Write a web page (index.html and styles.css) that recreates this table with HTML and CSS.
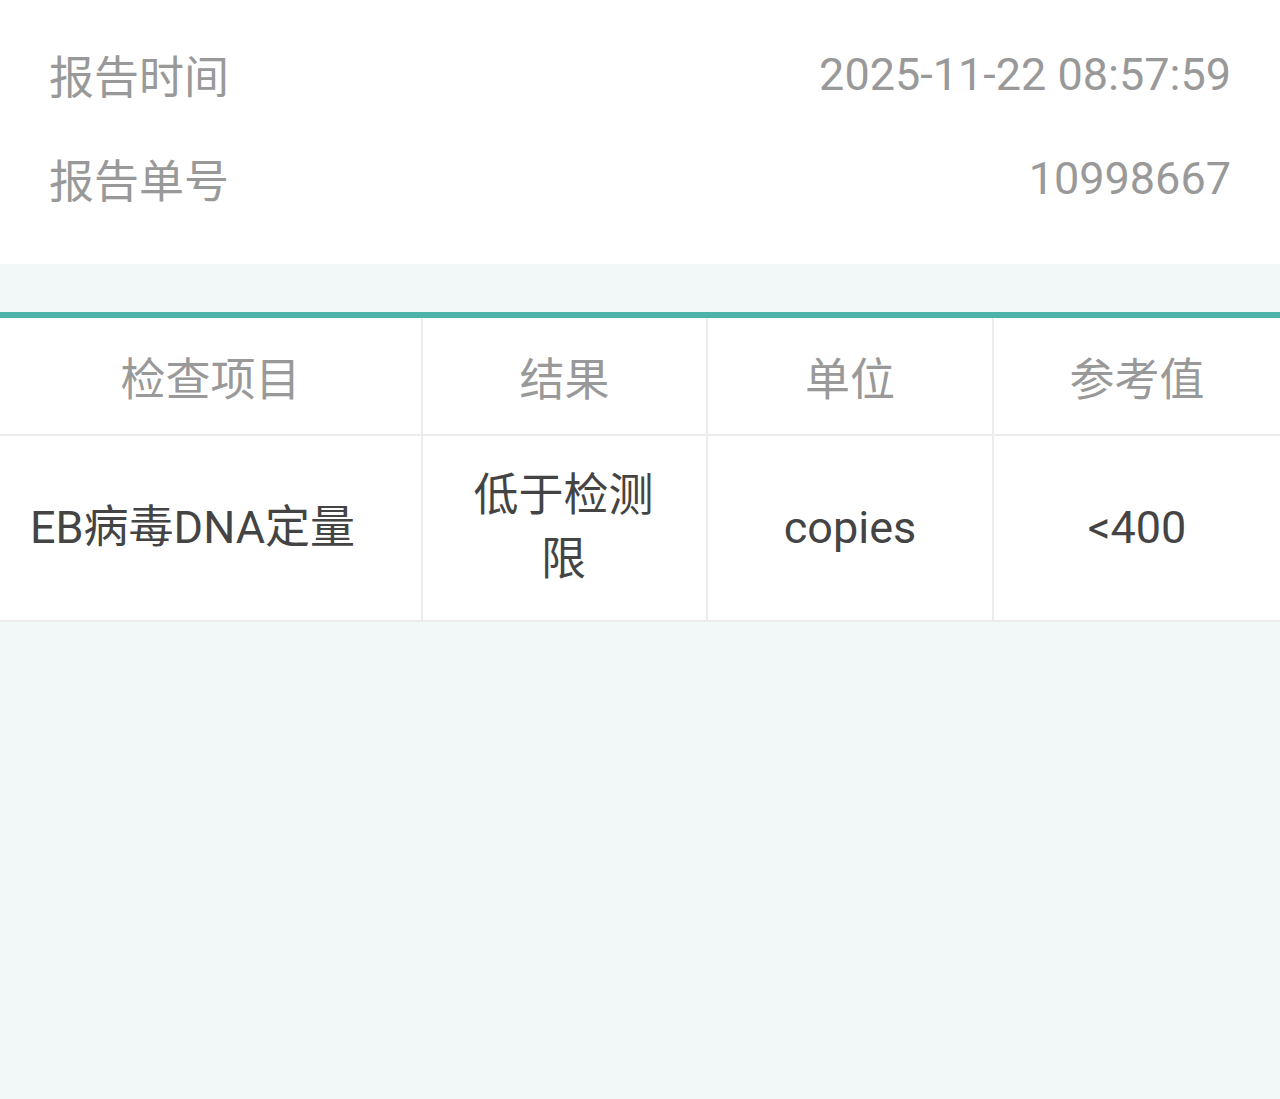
FILE: index.html
```html
<!doctype html>
<html lang="zh-CN">
  <head>
    <meta charset="UTF-8" />
    <title>检验报告</title>
    <link rel="stylesheet" href="styles.css">
  </head>
  <body>
    <div class="info">
      <div class="info-row">
        <span class="label">报告时间</span>
        <span class="value">2025-11-22 08:57:59</span>
      </div>
      <div class="info-row">
        <span class="label">报告单号</span>
        <span class="value">10998667</span>
      </div>
    </div>
    <div class="gap"></div>
    <table class="result-table">
      <colgroup>
        <col class="col-item" />
        <col class="col-result" />
        <col class="col-unit" />
        <col class="col-ref" />
      </colgroup>
      <thead>
        <tr>
          <th>检查项目</th>
          <th>结果</th>
          <th>单位</th>
          <th>参考值</th>
        </tr>
      </thead>
      <tbody>
        <tr>
          <td class="item">EB病毒DNA定量</td>
          <td class="result">低于检测限</td>
          <td>copies</td>
          <td>&lt;400</td>
        </tr>
      </tbody>
    </table>
  </body>
</html>
```

FILE: styles.css
```css
html,
body {
  margin: 0;
  padding: 0;
}
body {
  font-family: Roboto, "Noto Sans CJK SC", sans-serif;
  font-size: 45px;
  background: #f2f7f7;
  min-height: 1099px;
}
.info {
  background: #fff;
  padding: 22px 49px 34px 49px;
}
.info-row {
  display: flex;
  justify-content: space-between;
  align-items: center;
  height: 104px;
  color: #999;
}
.gap {
  height: 48px;
}
.result-table {
  width: 100%;
  table-layout: fixed;
  border-collapse: collapse;
  background: #fff;
  border-top: 6px solid #4db3a8;
}
.col-item {
  width: 422px;
}
.col-result {
  width: 285px;
}
.col-unit {
  width: 286px;
}
th,
td {
  text-align: center;
  border-right: 2px solid #ececec;
  border-bottom: 2px solid #ececec;
  font-weight: normal;
}
th:last-child,
td:last-child {
  border-right: none;
}
th {
  color: #999;
  height: 116px;
  padding: 0;
}
td {
  color: #444;
  height: 184px;
  padding: 0 20px;
  line-height: 64px;
}
td.item {
  padding: 0 36px 0 0;
}
td.result {
  padding: 0 50px 0 48px;
}
```
